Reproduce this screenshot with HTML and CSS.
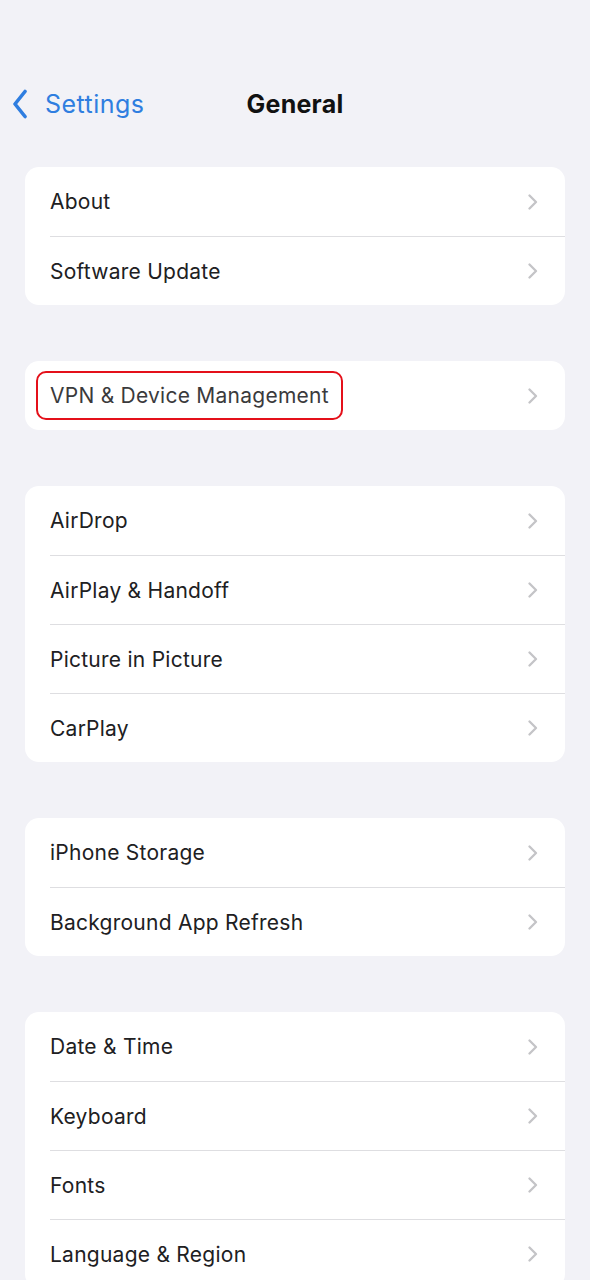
FILE: index.html
```html
<!DOCTYPE html>
<html>
<head>
<meta charset="utf-8">
<link rel="stylesheet" href="styles.css">
</head>
<body>
<header class="nav">
  <div class="back">
    <svg class="back-chev" width="16" height="30" viewBox="0 0 16 30"><path d="M13 2.5 L3 15 L13 27.5" fill="none" stroke="#2f7ee0" stroke-width="3.6" stroke-linecap="round" stroke-linejoin="round"/></svg>
    <span class="back-label">Settings</span>
  </div>
  <h1 class="title">General</h1>
</header>
<main class="content">
  <section class="group">
    <div class="row"><span class="label">About</span><svg class="chev" width="10" height="16" viewBox="0 0 10 16"><path d="M1.5 1.5 L8 8 L1.5 14.5" fill="none" stroke="#c4c4c7" stroke-width="2.3" stroke-linecap="round" stroke-linejoin="round"/></svg></div>
    <div class="row"><span class="label">Software Update</span><svg class="chev" width="10" height="16" viewBox="0 0 10 16"><path d="M1.5 1.5 L8 8 L1.5 14.5" fill="none" stroke="#c4c4c7" stroke-width="2.3" stroke-linecap="round" stroke-linejoin="round"/></svg></div>
  </section>
  <section class="group">
    <div class="row"><span class="label highlight">VPN &amp; Device Management</span><svg class="chev" width="10" height="16" viewBox="0 0 10 16"><path d="M1.5 1.5 L8 8 L1.5 14.5" fill="none" stroke="#c4c4c7" stroke-width="2.3" stroke-linecap="round" stroke-linejoin="round"/></svg></div>
  </section>
  <section class="group">
    <div class="row"><span class="label">AirDrop</span><svg class="chev" width="10" height="16" viewBox="0 0 10 16"><path d="M1.5 1.5 L8 8 L1.5 14.5" fill="none" stroke="#c4c4c7" stroke-width="2.3" stroke-linecap="round" stroke-linejoin="round"/></svg></div>
    <div class="row"><span class="label">AirPlay &amp; Handoff</span><svg class="chev" width="10" height="16" viewBox="0 0 10 16"><path d="M1.5 1.5 L8 8 L1.5 14.5" fill="none" stroke="#c4c4c7" stroke-width="2.3" stroke-linecap="round" stroke-linejoin="round"/></svg></div>
    <div class="row"><span class="label">Picture in Picture</span><svg class="chev" width="10" height="16" viewBox="0 0 10 16"><path d="M1.5 1.5 L8 8 L1.5 14.5" fill="none" stroke="#c4c4c7" stroke-width="2.3" stroke-linecap="round" stroke-linejoin="round"/></svg></div>
    <div class="row"><span class="label">CarPlay</span><svg class="chev" width="10" height="16" viewBox="0 0 10 16"><path d="M1.5 1.5 L8 8 L1.5 14.5" fill="none" stroke="#c4c4c7" stroke-width="2.3" stroke-linecap="round" stroke-linejoin="round"/></svg></div>
  </section>
  <section class="group">
    <div class="row"><span class="label">iPhone Storage</span><svg class="chev" width="10" height="16" viewBox="0 0 10 16"><path d="M1.5 1.5 L8 8 L1.5 14.5" fill="none" stroke="#c4c4c7" stroke-width="2.3" stroke-linecap="round" stroke-linejoin="round"/></svg></div>
    <div class="row"><span class="label">Background App Refresh</span><svg class="chev" width="10" height="16" viewBox="0 0 10 16"><path d="M1.5 1.5 L8 8 L1.5 14.5" fill="none" stroke="#c4c4c7" stroke-width="2.3" stroke-linecap="round" stroke-linejoin="round"/></svg></div>
  </section>
  <section class="group">
    <div class="row"><span class="label">Date &amp; Time</span><svg class="chev" width="10" height="16" viewBox="0 0 10 16"><path d="M1.5 1.5 L8 8 L1.5 14.5" fill="none" stroke="#c4c4c7" stroke-width="2.3" stroke-linecap="round" stroke-linejoin="round"/></svg></div>
    <div class="row"><span class="label">Keyboard</span><svg class="chev" width="10" height="16" viewBox="0 0 10 16"><path d="M1.5 1.5 L8 8 L1.5 14.5" fill="none" stroke="#c4c4c7" stroke-width="2.3" stroke-linecap="round" stroke-linejoin="round"/></svg></div>
    <div class="row"><span class="label">Fonts</span><svg class="chev" width="10" height="16" viewBox="0 0 10 16"><path d="M1.5 1.5 L8 8 L1.5 14.5" fill="none" stroke="#c4c4c7" stroke-width="2.3" stroke-linecap="round" stroke-linejoin="round"/></svg></div>
    <div class="row"><span class="label">Language &amp; Region</span><svg class="chev" width="10" height="16" viewBox="0 0 10 16"><path d="M1.5 1.5 L8 8 L1.5 14.5" fill="none" stroke="#c4c4c7" stroke-width="2.3" stroke-linecap="round" stroke-linejoin="round"/></svg></div>
  </section>
</main>
</body>
</html>
```

FILE: styles.css
```css
* { box-sizing: border-box; }
html, body { margin: 0; padding: 0; }
body {
  background: #f2f2f7;
  font-family: Inter, "Noto Sans", "Liberation Sans", sans-serif;
  color: #1f1f21;
  width: 590px;
  overflow: hidden;
}
.nav {
  position: relative;
  height: 48px;
  margin-top: 80px;
  margin-bottom: 39px;
  display: flex;
  align-items: center;
  justify-content: center;
}
.back {
  position: absolute;
  left: 12px;
  top: 0;
  height: 48px;
  display: flex;
  align-items: center;
  gap: 17px;
}
.back-chev { display: block; }
.back-label {
  color: #2f7ee0;
  font-size: 25px;
  font-weight: 400;
  letter-spacing: 0.45px;
}
.title {
  margin: 0;
  font-size: 25px;
  font-weight: 700;
  color: #111;
  letter-spacing: 0.25px;
}
.content {
  padding: 0 25px;
  display: flex;
  flex-direction: column;
  gap: 56px;
}
.group {
  background: #fff;
  border-radius: 14px;
  overflow: hidden;
}
.row {
  height: 69px;
  margin-left: 25px;
  padding-right: 27px;
  display: flex;
  align-items: center;
  justify-content: space-between;
  border-top: 1px solid #dedee1;
}
.row:first-child { border-top: none; }
.label {
  font-size: 21px;
  color: #202022;
  letter-spacing: 0.25px;
}
.highlight {
  margin-left: -14px;
  padding: 0 12px;
  height: 49px;
  line-height: 45px;
  border: 2px solid #e4101a;
  border-radius: 10px;
  color: #3a3a3c;
}
.chev { display: block; flex: none; }
```
